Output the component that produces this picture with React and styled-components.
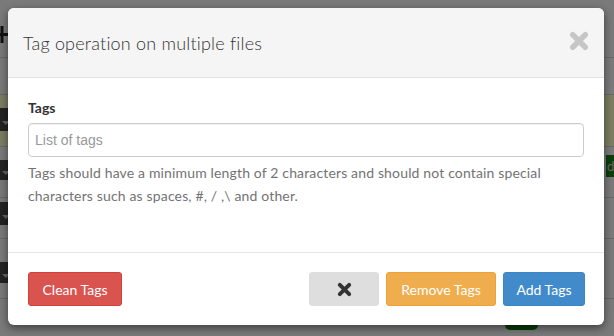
import React from "react";
import styled, { createGlobalStyle } from "styled-components";

const GlobalStyle = createGlobalStyle`
  html, body {
    margin: 0;
    padding: 0;
  }
  body {
    font-family: Lato, "Open Sans", sans-serif;
    color: #333;
  }
  * {
    box-sizing: border-box;
  }
`;

function Times({ size = 14, color = "#333", weight = 4.6 }) {
  return (
    <svg width={size} height={size} viewBox="0 0 16 16">
      <path
        d="M3 3 L13 13 M13 3 L3 13"
        stroke={color}
        strokeWidth={weight}
        strokeLinecap="round"
        fill="none"
      />
    </svg>
  );
}

function App() {
  return (
    <Page>
      <GlobalStyle />
      <Behind>
        <TopBar>
          <PlusIcon viewBox="0 0 12 20">
            <path d="M4.5 2 h3 v7 h4.5 v3 h-4.5 v7 h-3 v-7 h-4.5 v-3 h4.5 z" fill="#222" />
          </PlusIcon>
        </TopBar>
        <Row h={36} />
        <Row h={51} olive>
          <Caret top={13} h={23} />
        </Row>
        <Row h={50}>
          <Caret top={13} h={20} />
          <GreenTag>dr</GreenTag>
        </Row>
        <Row h={40}>
          <Caret top={4} h={23} />
        </Row>
        <Row h={59}>
          <Caret top={23} h={21} />
        </Row>
        <LastRow>
          <GreenPill />
        </LastRow>
      </Behind>
      <Backdrop />
      <ModalLayer>
        <Modal>
          <Header>
            <Title>Tag operation on multiple files</Title>
            <CloseButton aria-label="close">
              <Times size={20} color="#c6c6c6" weight={4.4} />
            </CloseButton>
          </Header>
          <Body>
            <Label>Tags</Label>
            <Input placeholder="List of tags" />
            <Help>
              Tags should have a minimum length of 2 characters and should not
              contain special characters such as spaces, #, / ,\ and other.
            </Help>
          </Body>
          <Footer>
            <Button variant="danger" w={94}>
              Clean Tags
            </Button>
            <Actions>
              <Button variant="default" w={70}>
                <Times size={15} color="#333" weight={4.2} />
              </Button>
              <Button variant="warning" w={110}>
                Remove Tags
              </Button>
              <Button variant="primary" w={82}>
                Add Tags
              </Button>
            </Actions>
          </Footer>
        </Modal>
      </ModalLayer>
    </Page>
  );
}

const colors = {
  danger: { bg: "#d9534f", border: "#d43f3a", fg: "#fff" },
  default: { bg: "#dedede", border: "#dedede", fg: "#333" },
  warning: { bg: "#f0ad4e", border: "#eea236", fg: "#fff" },
  primary: { bg: "#428bca", border: "#3f85c3", fg: "#fff" },
};

const Page = styled.div`
  position: relative;
  width: 614px;
  height: 336px;
  overflow: hidden;
  background: #f4f4f4;
`;

const Behind = styled.div`
  display: flex;
  flex-direction: column;
  height: 100%;
`;

const TopBar = styled.div`
  height: 58px;
  border-bottom: 1px solid #d2d2d2;
  display: flex;
  align-items: flex-start;
  padding-top: 24px;
`;

const PlusIcon = styled.svg`
  width: 12px;
  height: 20px;
  margin-left: -4px;
`;

const Row = styled.div`
  position: relative;
  height: ${(p) => p.h + 1}px;
  border-bottom: 1px solid #d2d2d2;
  background: ${(p) => (p.olive ? "#f8fbc6" : "transparent")};
  display: flex;
  justify-content: space-between;
  align-items: flex-start;
`;

const LastRow = styled.div`
  flex: 1;
  display: flex;
  justify-content: flex-end;
  padding: 18px 76px 0 0;
`;

const Caret = styled.div`
  margin-top: ${(p) => p.top}px;
  width: 8px;
  height: ${(p) => p.h}px;
  background: #464646;
  position: relative;
  &::after {
    content: "";
    position: absolute;
    left: 2px;
    top: ${(p) => Math.round(p.h / 2) + 1}px;
    border-left: 4px solid transparent;
    border-right: 4px solid transparent;
    border-top: 4px solid #c8c8c8;
  }
`;

const GreenTag = styled.div`
  margin-top: 8px;
  width: 8px;
  height: 22px;
  background: #167a16;
  color: #ccc;
  font-size: 13px;
  line-height: 22px;
  padding-left: 1px;
  overflow: hidden;
  white-space: nowrap;
`;

const GreenPill = styled.div`
  width: 33px;
  height: 13px;
  background: #0c7a0c;
  border-radius: 5px;
`;

const Backdrop = styled.div`
  position: absolute;
  inset: 0;
  background: rgba(0, 0, 0, 0.5);
`;

const ModalLayer = styled.div`
  position: absolute;
  inset: 0;
  padding: 8px 10px 0 8px;
`;

const Modal = styled.div`
  width: 596px;
  background: #fff;
  border-radius: 6px;
  box-shadow: 0 3px 9px rgba(0, 0, 0, 0.5);
  overflow: hidden;
`;

const Header = styled.div`
  height: 70px;
  background: #f5f5f5;
  border-bottom: 1px solid #e3e3e3;
  display: flex;
  align-items: center;
  justify-content: space-between;
  padding: 0 15px 0 15px;
`;

const Title = styled.h4`
  margin: 0;
  font-size: 18px;
  font-weight: 300;
  color: #333;
  letter-spacing: 0.2px;
`;

const CloseButton = styled.button`
  border: 0;
  background: none;
  padding: 0;
  display: flex;
  margin-top: -3px;
`;

const Body = styled.div`
  height: 175px;
  padding: 20px 20px 0 20px;
  border-bottom: 1px solid #e5e5e5;
  display: flex;
  flex-direction: column;
`;

const Label = styled.label`
  font-size: 14px;
  font-weight: 700;
  line-height: 20px;
  margin-bottom: 5px;
  color: #333;
`;

const Input = styled.input`
  height: 34px;
  width: 100%;
  border: 1px solid #ccc;
  border-radius: 4px;
  padding: 6px 6px;
  font-family: "Liberation Sans", Arial, sans-serif;
  font-size: 14px;
  color: #555;
  box-shadow: inset 0 1px 1px rgba(0, 0, 0, 0.06);
  &::placeholder {
    color: #999;
  }
`;

const Help = styled.p`
  margin: 4px 0 0;
  font-size: 14px;
  line-height: 23px;
  color: #737373;
  letter-spacing: 0.15px;
`;

const Footer = styled.div`
  display: flex;
  align-items: center;
  justify-content: space-between;
  padding: 19px 19px 19px 20px;
`;

const Actions = styled.div`
  display: flex;
  gap: 7px;
`;

const Button = styled.button`
  width: ${(p) => p.w}px;
  height: 34px;
  display: flex;
  align-items: center;
  justify-content: center;
  padding: 0 12px;
  font-family: Lato, sans-serif;
  font-size: 14px;
  border-radius: 3px;
  background: ${(p) => colors[p.variant].bg};
  border: 1px solid ${(p) => colors[p.variant].border};
  color: ${(p) => colors[p.variant].fg};
`;

export default App;
